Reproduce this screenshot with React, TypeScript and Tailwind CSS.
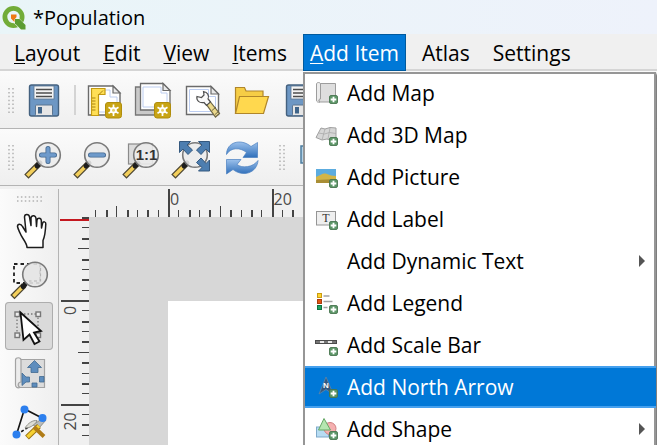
import type { ReactNode } from "react";

type IconProps = { children: ReactNode };

/* 49 x 48 drawing surface shared by all toolbar buttons */
function BarIcon({ children }: IconProps) {
  return (
    <svg width="49" height="48" viewBox="0 0 49 48" fill="none" aria-hidden="true" className="block">
      {children}
    </svg>
  );
}

function SideIcon({ children }: IconProps) {
  return (
    <svg width="48" height="48" viewBox="0 0 48 48" fill="none" aria-hidden="true" className="block">
      {children}
    </svg>
  );
}

function Floppy() {
  return (
    <BarIcon>
      <rect x="9.5" y="9" width="29" height="31" rx="2" fill="#6d97c4" stroke="#44617f" strokeWidth="1.4" />
      <rect x="14" y="10" width="20" height="13" fill="#f4f4f4" stroke="#5b7591" strokeWidth="0.8" />
      <path d="M16 13.5h16M16 17h16M16 20.5h16" stroke="#4c4c4c" strokeWidth="1.4" />
      <rect x="15.5" y="29" width="17" height="10.5" rx="1" fill="#e6e6e6" stroke="#5b7591" />
      <rect x="18" y="31" width="4" height="6.5" fill="#3f6489" />
    </BarIcon>
  );
}

function Star({ x, y }: { x: number; y: number }) {
  return (
    <g transform={`translate(${x} ${y})`}>
      <rect x="0.5" y="0.5" width="16" height="15.5" rx="2.5" fill="#c8a414" stroke="#b08d0c" />
      <path d="M8.5 2.5v11.5M3.5 5.2l10 6M13.5 5.200l-10 6" stroke="#fff" strokeWidth="1.7" />
      <circle cx="8.5" cy="8.2" r="3.3" fill="#fff" />
      <circle cx="8.5" cy="8.2" r="1.5" fill="#e6cf6a" />
    </g>
  );
}

function NewLayout() {
  return (
    <BarIcon>
      <path d="M7.5 10H32l7 7v22H7.5z" fill="#fff" stroke="#6b6b6b" strokeWidth="1.4" />
      <path d="M11 14h18v7h7v15H11z" stroke="#bccdf0" />
      <path d="M32 10v7h7z" fill="#e9e9e9" stroke="#6b6b6b" strokeWidth="1.2" />
      <path d="M10.5 12.5H24v6h-6.5V39.5h-7z" fill="#ffdf55" stroke="#c39a12" strokeWidth="1.2" />
      <path d="M11 22h3.5M11 25h3.5M11 28h3.5M11 31h3.5M11 34h3.5M18 18.500l4-4" stroke="#a98310" />
      <Star x={24} y={26} />
    </BarIcon>
  );
}

function Duplicate() {
  return (
    <BarIcon>
      <path d="M5.5 11H31v28H5.5z" fill="#c9c9c9" stroke="#757575" strokeWidth="1.3" />
      <path d="M10.5 7.5H33l7 7V34H10.5z" fill="#fff" stroke="#6b6b6b" strokeWidth="1.3" />
      <path d="M13 11h18v6h6v14H13z" stroke="#bccdf0" />
      <path d="M33 7.5v7h7z" fill="#e9e9e9" stroke="#6b6b6b" strokeWidth="1.2" />
      <Star x={24} y={26} />
    </BarIcon>
  );
}

function Manager() {
  return (
    <BarIcon>
      <path d="M7.5 10.5H32l7.5 7.5v20.5H7.5z" fill="#fff" stroke="#6b6b6b" strokeWidth="1.4" />
      <path d="M10.5 13.5h19v7h7v15h-26z" stroke="#bccdf0" />
      <path d="M32 10.5V18h7.5z" fill="#e9e9e9" stroke="#6b6b6b" strokeWidth="1.2" />
      <path d="M26 26.5l3.5-3 11 14-4 3.5z" fill="#ecd98c" stroke="#6d6544" strokeWidth="1.2" />
      <path d="M33 34.500l4-3.5M36 38.500l4-3.5" stroke="#6d6544" />
      <path d="M18 20.5l4.5 1 2.500-2.5-.5-3.500c4 .5 6 4 4.500 7.500l2.500 3-4 3.500-2.500-3c-4.500 1-8-2-7-6z" fill="#fafafa" stroke="#505050" strokeWidth="1.2" />
    </BarIcon>
  );
}

function Folder() {
  return (
    <BarIcon>
      <path d="M7.500 37.500v-26h9l1.500 3.500h17v6" fill="#f6cd45" stroke="#b0862a" strokeWidth="1.2" />
      <path d="M7.500 37.500l4-17h29l-5 17z" fill="#ffd84e" stroke="#b0862a" strokeWidth="1.2" />
    </BarIcon>
  );
}

function Lens({ children }: { children?: ReactNode }) {
  return (
    <>
      <path d="M17.5 32.5L8.500 41.500" stroke="#4d4632" strokeWidth="6" strokeLinecap="square" />
      <path d="M16 34L8.500 41.500" stroke="#f3cf5b" strokeWidth="3.6" strokeLinecap="square" />
      <path d="M20 30l-3 3" stroke="#1d1d1d" strokeWidth="5" strokeLinecap="round" />
      <circle cx="28" cy="22" r="12.3" fill="#ececec" fillOpacity="0.88" stroke="#7a7a7a" strokeWidth="1.6" />
      {children}
    </>
  );
}

function ZoomIn() {
  return (
    <BarIcon>
      <Lens>
        <path d="M28 15.500v13M21.500 22h13" stroke="#44688f" strokeWidth="5" strokeLinecap="round" />
        <path d="M28 15.500v13M21.500 22h13" stroke="#6e9acb" strokeWidth="3.4" strokeLinecap="round" />
      </Lens>
    </BarIcon>
  );
}

function ZoomOut() {
  return (
    <BarIcon>
      <Lens>
        <path d="M21.500 22h13" stroke="#44688f" strokeWidth="5" strokeLinecap="round" />
        <path d="M21.500 22h13" stroke="#6e9acb" strokeWidth="3.4" strokeLinecap="round" />
      </Lens>
    </BarIcon>
  );
}

function ZoomActual() {
  return (
    <BarIcon>
      <rect x="10.5" y="11" width="24" height="20" fill="#dcdcdc" stroke="#8a8a8a" strokeWidth="1.2" />
      <Lens>
        <text x="28.5" y="27" textAnchor="middle" fontSize="15" fontWeight="700" fill="#333" fontFamily="Liberation Sans, sans-serif">
          1:1
        </text>
      </Lens>
    </BarIcon>
  );
}

function ZoomFull() {
  const arrow = "M0 0h11l-3.500 3.500 5.500 5-4.500 4.500-5-5.500L0 11z";
  return (
    <BarIcon>
      <Lens />
      <g fill="#4d7eb0" stroke="#35597f" strokeWidth="1">
        <path d={arrow} transform="translate(12.500 8.500)" />
        <path d={arrow} transform="translate(42.500 8.500) scale(-1 1)" />
        <path d={arrow} transform="translate(42.500 38) scale(-1 -1)" />
      </g>
    </BarIcon>
  );
}

function Refresh() {
  return (
    <BarIcon>
      <defs>
        <linearGradient id="refreshBlue" x1="0" y1="0" x2="0" y2="1">
          <stop offset="0" stopColor="#9cc1ec" />
          <stop offset="1" stopColor="#2f6fba" />
        </linearGradient>
      </defs>
      <g fill="url(#refreshBlue)" stroke="#4a7fc0" strokeWidth="0.7">
        <path d="M10.500 21.500C10.500 9 25 5 35 13.500L41.500 9.500V24.500H27l3.500-5C24 14 14.500 14.500 10.500 21.500z" />
        <path d="M42 27.500C41 40 27 44.500 17 36.500L10.500 41V26.500H25l-4 5C26 35.500 37 34.500 42 27.500z" />
      </g>
    </BarIcon>
  );
}

function Hand() {
  return (
    <SideIcon>
      <path
        d="M22 41.500c0-5-5-9-7-14.500-1-2.500-2-4-2.500-6.500 0-3 3.500-3 5 0l3.500 5.500-1.500-15c0-3.500 4.500-3.500 5 0l1.500 8.500V12c.500-3 4.500-3 5 .500l.5 8 .5-6.500c.500-2.500 4-2.500 4.300.500l.2 7.500 1-4.500c.700-2.500 3.500-2 3.300.500-.300 7-.800 12-2.800 16.500v7z"
        fill="#fff"
        stroke="#1c1c1c"
        strokeWidth="1.500"
        strokeLinejoin="round"
      />
    </SideIcon>
  );
}

function ZoomTool() {
  return (
    <SideIcon>
      <rect x="9" y="10" width="26" height="19" stroke="#222" strokeWidth="1.800" strokeDasharray="3.500 3" />
      <path d="M17 33.500L9.500 41" stroke="#4d4632" strokeWidth="6" strokeLinecap="square" />
      <path d="M16 34.500L9.500 41" stroke="#f3cf5b" strokeWidth="3.400" strokeLinecap="square" />
      <path d="M20 30.500l-2 2" stroke="#1d1d1d" strokeWidth="5" strokeLinecap="round" />
      <circle cx="30" cy="20.500" r="12.300" fill="#e4e4e4" fillOpacity="0.900" stroke="#7a7a7a" strokeWidth="1.600" />
      <path d="M35.500 14v13H24" stroke="#b4b4b4" strokeWidth="1.200" strokeDasharray="3 2.500" />
    </SideIcon>
  );
}

function SelectTool() {
  return (
    <SideIcon>
      <rect x="12" y="12" width="21" height="21" stroke="#777" strokeWidth="1.300" strokeDasharray="1.500 2" />
      <g fill="#eee" stroke="#777" strokeWidth="1.400">
        <rect x="10" y="10" width="4.500" height="4.500" />
        <rect x="31" y="10" width="4.500" height="4.500" />
        <rect x="10" y="31" width="4.500" height="4.500" />
        <rect x="31" y="31" width="4.500" height="4.500" />
      </g>
      <path d="M15.500 10.500L36 29l-7 1.500L34.500 39.500l-5 2.500-5-9.500-6 5.500z" fill="#fff" stroke="#111" strokeWidth="1.800" />
    </SideIcon>
  );
}

function MoveContent() {
  return (
    <SideIcon>
      <path d="M14 9.500h25.500v28H13z" fill="#dcdcdc" stroke="#a3a3a3" strokeWidth="1.200" />
      <path d="M10.500 10c0-3 5.500-3 5.500 0v22c-3 0-4 4-1 5.500-3 1-4.500-.500-4.500-3z" fill="#ececec" stroke="#a3a3a3" strokeWidth="1.200" />
      <g fill="#5e8dbd" stroke="#416990" strokeWidth="0.800">
        <path d="M29.500 10.500l7 7h-3.500v5h-7v-5h-3.500z" />
        <path d="M17 23l4 4h3.500v5H21l-4 3.500z" />
        <path d="M39 26.500v5.500h-4.500v-5.500zM27 33h5v4h-5z" />
      </g>
    </SideIcon>
  );
}

function EditNodes() {
  return (
    <SideIcon>
      <path d="M11.500 36.500L19.500 11 37 20" stroke="#151515" strokeWidth="1.600" />
      <path d="M12 36.500l13-8.500" stroke="#151515" strokeWidth="1.600" strokeDasharray="3 2" />
      <path d="M28 27l10-7 3 2-7 8z" fill="#b9bcbc" stroke="#8f8f8a" />
      <path d="M22 39.500L34 28" stroke="#9c7410" strokeWidth="5.500" />
      <path d="M22.500 39L34 28" stroke="#f6d132" strokeWidth="3.600" />
      <path d="M29 29l10 9.500" stroke="#b07c17" strokeWidth="4" />
      <path d="M20 30c3-5 8-8 12-7.500-1 3-5 6-8 7z" fill="#ddddd5" stroke="#93938d" />
      <circle cx="19.500" cy="11.500" r="4" fill="#2c7fee" />
      <circle cx="37.500" cy="20" r="4" fill="#2c7fee" />
      <circle cx="11.500" cy="36.500" r="4" fill="#2c7fee" />
    </SideIcon>
  );
}

/* small green plus badge that sits at the corner of every menu icon */
function MenuIcon({ children }: IconProps) {
  return (
    <svg width="24" height="24" viewBox="0 0 24 24" fill="none" aria-hidden="true" className="block">
      {children}
      <rect x="14.500" y="14.500" width="8" height="8" rx="1.500" fill="#5d9668" stroke="#47754f" strokeWidth="0.900" />
      <path d="M18.500 15.700v5.600M15.700 18.500h5.600" stroke="#fff" strokeWidth="1.800" />
    </svg>
  );
}

const menuItems: { label: string; icon?: ReactNode; active?: boolean; sub?: boolean }[] = [
  {
    label: "Add Map",
    icon: (
      <MenuIcon>
        <path d="M4 2.500h16.500V21H4z" fill="#dedede" stroke="#9d9d9d" />
        <path d="M1.500 3c0-2 4-2 4 0v15c-2 0-2.500 2-.500 3-2 .500-3.500 0-3.500-2z" fill="#ececec" stroke="#9d9d9d" />
      </MenuIcon>
    ),
  },
  {
    label: "Add 3D Map",
    icon: (
      <MenuIcon>
        <path d="M6 5l4 1 5-1.500 6 .5v12l-4 1-5-2-5 1-6-2.500z" fill="#d6d6d6" stroke="#a0a0a0" />
        <path d="M3.500 10l6 1 5-1.500 6.500 1M10 6l-3 11M15 5l-2 11" stroke="#aaa" strokeWidth="0.800" />
      </MenuIcon>
    ),
  },
  {
    label: "Add Picture",
    icon: (
      <MenuIcon>
        <rect x="1" y="4" width="20" height="14" fill="#5cacdf" />
        <path d="M1 12c5-2 7-4.500 11-3 3 1 5 2 9 2v7H1z" fill="#d3b546" />
        <path d="M1 15l20-1v4H1z" fill="#a98e35" />
      </MenuIcon>
    ),
  },
  {
    label: "Add Label",
    icon: (
      <MenuIcon>
        <rect x="1.500" y="4.500" width="19" height="13.500" fill="#efefef" stroke="#959595" />
        <text x="11" y="15" textAnchor="middle" fontSize="12" fill="#333" fontFamily="Liberation Serif, serif">
          T
        </text>
      </MenuIcon>
    ),
  },
  { label: "Add Dynamic Text", sub: true },
  {
    label: "Add Legend",
    icon: (
      <MenuIcon>
        <rect x="2.500" y="2.500" width="4" height="4" fill="#ffd52c" stroke="#c99b13" />
        <rect x="2.500" y="8.500" width="4" height="4" fill="#e35312" stroke="#a93c0c" />
        <rect x="2.500" y="14.500" width="4" height="4" fill="#1fa362" stroke="#0f7342" />
        <path d="M8.500 5h6M8.500 10.500h9M8.500 16.500h4" stroke="#a2a2a2" strokeWidth="1.500" />
      </MenuIcon>
    ),
  },
  {
    label: "Add Scale Bar",
    icon: (
      <MenuIcon>
        <rect x="0.500" y="7.500" width="21" height="3" fill="#e8e8e8" stroke="#4b4b4b" />
        <path d="M1 9h4M9 9h4M17 9h4" stroke="#777" strokeWidth="2" />
      </MenuIcon>
    ),
  },
  {
    label: "Add North Arrow",
    active: true,
    icon: (
      <MenuIcon>
        <path d="M11 2l7.500 17.500L11 14.500l-7 4.500z" fill="#35597f" stroke="#5d87ab" strokeWidth="0.800" />
        <text x="11" y="13" textAnchor="middle" fontSize="8" fontWeight="700" fill="#fff" fontFamily="Liberation Sans, sans-serif">
          N
        </text>
      </MenuIcon>
    ),
  },
  {
    label: "Add Shape",
    sub: true,
    icon: (
      <MenuIcon>
        <rect x="1.500" y="10" width="12" height="10" fill="#b7dcf3" stroke="#7ea9c9" />
        <circle cx="15" cy="11.500" r="6" fill="#f5b0b0" stroke="#cf8181" />
        <path d="M9 1.500l6.500 11.500h-12z" fill="#b5e6b0" stroke="#65a865" />
      </MenuIcon>
    ),
  },
];

const menus: { key: string; rest: string; underline: boolean }[] = [
  { key: "L", rest: "ayout", underline: true },
  { key: "E", rest: "dit", underline: true },
  { key: "V", rest: "iew", underline: true },
  { key: "I", rest: "tems", underline: true },
  { key: "A", rest: "dd Item", underline: true },
  { key: "A", rest: "tlas", underline: false },
  { key: "S", rest: "ettings", underline: false },
];

function Grip() {
  return (
    <svg width="6" height="26" viewBox="0 0 6 26" aria-hidden="true" className="block shrink-0">
      <path d="M1 1v25M5 1v25" stroke="#b3b3b3" strokeWidth="1.500" strokeDasharray="1.500 2.400" />
    </svg>
  );
}

function ToolButton({ label, children }: { label: string; children: ReactNode }) {
  return (
    <button type="button" aria-label={label} className="shrink-0">
      {children}
    </button>
  );
}

const UNIT = 10.36;
const LABELS = [0, 20];

function tickLength(n: number) {
  if (n % 10 === 0) return 28;
  return n % 5 === 0 ? 11 : 7;
}

function HorizontalRuler() {
  const ticks = Array.from({ length: 56 }, (_, i) => i - 7);
  return (
    <svg width="100%" height="28" aria-hidden="true" className="block">
      {ticks.map((n) => (
        <rect key={n} x={Math.round(79 + n * UNIT)} y={28 - tickLength(n)} width={n % 2 ? 1 : 2} height={tickLength(n)} fill="#444" />
      ))}
      {LABELS.map((v) => (
        <text key={v} x={81 + (v / 2) * UNIT} y="16" fontSize="16" fill="#4a4a4a" fontFamily="Open Sans, Noto Sans, sans-serif">
          {v}
        </text>
      ))}
    </svg>
  );
}

function VerticalRuler() {
  const ticks = Array.from({ length: 40 }, (_, i) => i - 8);
  return (
    <svg width="30" height="100%" aria-hidden="true" className="block">
      {ticks.map((n) => (
        <rect key={n} x={30 - tickLength(n)} y={Math.round(83 + n * UNIT)} width={tickLength(n)} height={n % 2 ? 1 : 2} fill="#444" />
      ))}
      <rect x="1" y="2" width="29" height="2" fill="#c4181f" />
      {LABELS.map((v) => (
        <text
          key={v}
          transform={`translate(17 ${(v ? 110 : 98) + (v / 2) * UNIT}) rotate(-90)`}
          fontSize="16"
          fill="#4a4a4a"
          fontFamily="Open Sans, Noto Sans, sans-serif"
        >
          {v}
        </text>
      ))}
    </svg>
  );
}

function AddItemMenu() {
  return (
    <ul
      role="menu"
      className="absolute top-[38px] left-0 z-10 w-[353px] border-2 border-[#969696] bg-white text-black shadow-[2px_2px_2px_#777777]"
    >
      {menuItems.map((item, i) => (
        <li key={item.label} role="none" className={i === 0 ? "-mt-[2px]" : ""}>
          <button
            type="button"
            role="menuitem"
            className={
              "flex h-[42px] items-center border-y-2 text-left " +
              (item.active ? "w-[351px] border-[#45a0ee] bg-[#0078d7] text-white" : "w-full border-transparent")
            }
          >
            <span className="ml-[10px] h-6 w-6 shrink-0">{item.icon}</span>
            <span className="ml-2 grow whitespace-nowrap">{item.label}</span>
            {item.sub && (
              <svg width="6" height="12" viewBox="0 0 6 12" aria-hidden="true" className="mr-[9px]">
                <path d="M0 0l6 6-6 6z" fill="#555" />
              </svg>
            )}
          </button>
        </li>
      ))}
    </ul>
  );
}

export default function App() {
  return (
    <div className="flex h-screen flex-col overflow-hidden bg-[#f0f0f0] font-['Open_Sans','Noto_Sans',sans-serif] text-[21px] leading-[30px] text-black">
      <header className="flex h-[34px] shrink-0 items-center bg-linear-to-r from-[#e9f5f8] to-[#eef2fb] pt-[2px]">
        <svg width="24" height="24" viewBox="0 0 24 24" aria-hidden="true" className="ml-[2px] block">
          <circle cx="11.500" cy="11" r="8.600" fill="none" stroke="#72ac38" strokeWidth="4.800" />
          <path d="M13 13l10 10.500" stroke="#f2f8f0" strokeWidth="7" />
          <path d="M13 13h4.500l6 6v4.500H19l-6-6z" fill="#5c9c32" />
          <path d="M9 8.500h5.500V11l-2 2.500v2.500L9 12.500z" fill="#ee7913" />
        </svg>
        <h1 className="ml-[7px] text-[20px]">*Population</h1>
      </header>

      <nav aria-label="Menu bar" className="flex h-[37px] shrink-0 gap-[9px] border-b-2 border-[#d5d5d5] pl-[7px]">
        {menus.map((m) => {
          const open = m.rest === "dd Item";
          return (
            <div key={m.rest} className="relative shrink-0">
              <button
                type="button"
                className={
                  "flex h-[37px] items-center border px-[6px] " +
                  (open ? "border-[#005a9e] bg-[#0078d7] text-white" : "border-transparent")
                }
              >
                <span className="whitespace-nowrap">
                  <span className={m.underline ? "underline decoration-1 underline-offset-2" : ""}>{m.key}</span>
                  {m.rest}
                </span>
              </button>
              {open && <AddItemMenu />}
            </div>
          );
        })}
      </nav>

      <div role="toolbar" aria-label="Layout" className="flex h-[58px] shrink-0 items-center border-b border-[#b4b4b4] bg-linear-to-b from-[#fbfbfb] to-[#efefef] pl-2">
        <Grip />
        <div className="ml-[6px] flex items-center">
          <ToolButton label="Save project"><Floppy /></ToolButton>
          <div className="mx-[5px] h-[30px] w-[2px] bg-[#d4d4d4]" />
          <ToolButton label="New layout"><NewLayout /></ToolButton>
          <ToolButton label="Duplicate layout"><Duplicate /></ToolButton>
          <ToolButton label="Layout manager"><Manager /></ToolButton>
          <ToolButton label="Add items from template"><Folder /></ToolButton>
          <ToolButton label="Save as template"><Floppy /></ToolButton>
        </div>
      </div>

      <div role="toolbar" aria-label="Navigation" className="flex h-[57px] shrink-0 items-center border-b border-[#b4b4b4] bg-linear-to-b from-[#fbfbfb] to-[#efefef] pl-2">
        <Grip />
        <div className="ml-[6px] flex items-center">
          <ToolButton label="Zoom in"><ZoomIn /></ToolButton>
          <ToolButton label="Zoom out"><ZoomOut /></ToolButton>
          <ToolButton label="Zoom to 100%"><ZoomActual /></ToolButton>
          <ToolButton label="Zoom full"><ZoomFull /></ToolButton>
          <ToolButton label="Refresh view"><Refresh /></ToolButton>
        </div>
        <div className="ml-[14px] flex items-center gap-2">
          <Grip />
          <ToolButton label="Group items">
            <BarIcon>
              <rect x="8" y="13" width="30" height="17" fill="#b6d4e8" stroke="#4c7c9f" strokeWidth="1.500" />
            </BarIcon>
          </ToolButton>
        </div>
      </div>

      <div className="flex min-h-0 grow pt-[3px]">
        <div role="toolbar" aria-label="Toolbox" aria-orientation="vertical" className="flex w-[59px] shrink-0 flex-col items-center border-r border-[#b4b4b4] bg-linear-to-r from-[#fbfbfb] to-[#efefef] pt-[7px]">
          <svg width="26" height="6" viewBox="0 0 26 6" aria-hidden="true" className="mb-1 block shrink-0">
            <path d="M1 1h25M1 5h25" stroke="#b3b3b3" strokeWidth="1.500" strokeDasharray="1.500 2.400" />
          </svg>
          <ToolButton label="Pan layout"><Hand /></ToolButton>
          <ToolButton label="Zoom"><ZoomTool /></ToolButton>
          <button type="button" aria-label="Select item" aria-pressed="true" className="h-12 w-12 shrink-0 rounded-[4px] bg-[#dadada] inset-ring inset-ring-[#adadad]">
            <SelectTool />
          </button>
          <ToolButton label="Move item content"><MoveContent /></ToolButton>
          <ToolButton label="Edit nodes"><EditNodes /></ToolButton>
        </div>

        <div className="flex w-[30px] shrink-0 flex-col pt-[28px]">
          <VerticalRuler />
        </div>

        <main className="flex min-w-0 grow flex-col">
          <HorizontalRuler />
          <div className="grow bg-[#d7d7d7] pt-[84px] pl-[79px]">
            <div className="h-full bg-white" />
          </div>
        </main>
      </div>
    </div>
  );
}
